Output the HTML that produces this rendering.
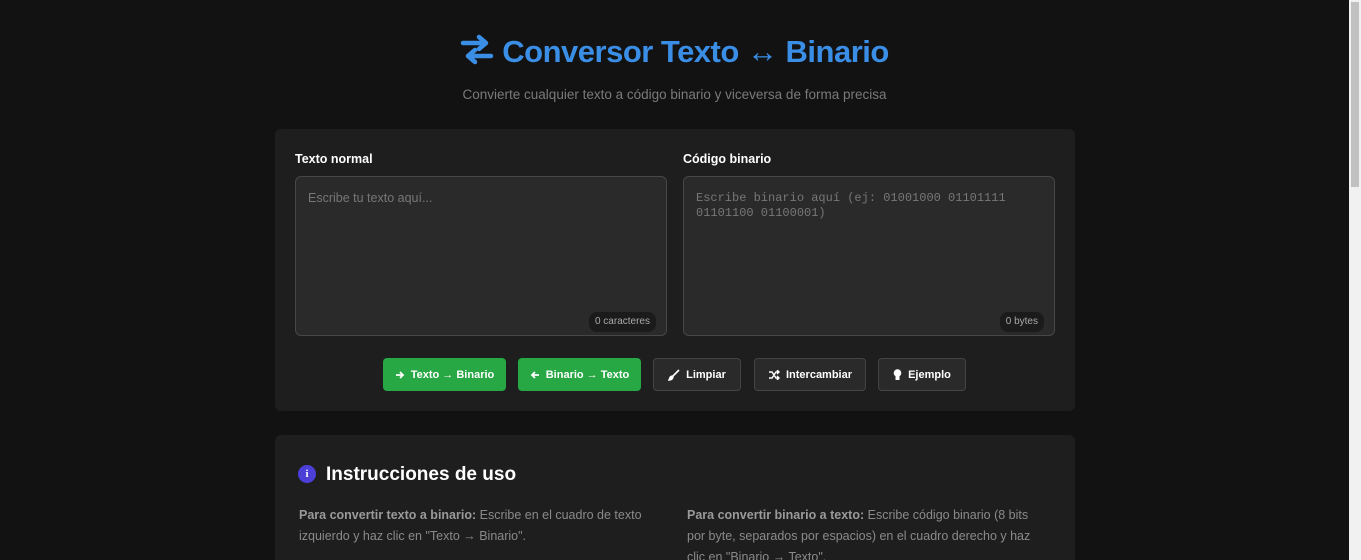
<!DOCTYPE html>
<html><head><meta charset="utf-8"><style>
*{box-sizing:border-box;margin:0;padding:0}
html,body{width:1361px;height:560px;overflow:hidden}
body{background:#121212;font-family:"Liberation Sans",sans-serif;color:#e0e0e0;position:relative}
.sb{position:absolute;right:0;top:0;width:12px;height:560px;background:#f1f1f1}
.sb div{position:absolute;left:2px;right:2px;top:2px;height:185px;background:#c1c1c1}
h1{position:absolute;left:0;width:1349px;top:32px;text-align:center;color:#3a8ee6;font-size:31px;font-weight:bold;letter-spacing:-0.5px}
.sub{position:absolute;left:0;width:1349px;top:87px;text-align:center;color:#7a7a7a;font-size:13.5px}
.card{position:absolute;left:275px;width:800px;background:#1e1e1e;border-radius:6px}
.lbl{position:absolute;top:152px;font-size:12.5px;font-weight:bold;color:#fff}
.ta{position:absolute;top:176px;height:160px;background:#2a2a2a;border:1px solid #474747;border-radius:6px;color:#777;font-size:12.5px;padding:14px 12px}
.mono{font-family:"Liberation Mono",monospace;font-size:12px;line-height:15px}
.cnt{position:absolute;bottom:3px;right:10px;background:#1b1b1b;border-radius:8px;color:#aaa;font-size:10px;padding:4px 6px;font-family:"Liberation Sans",sans-serif;line-height:12px}
.btn{position:absolute;top:358px;height:33px;border-radius:4px;font-size:11px;font-weight:bold;color:#fff;display:flex;align-items:center;justify-content:center;gap:6px}
.g{background:#28a745}
.d{background:#2a2a2a;border:1px solid #444}
.p{position:absolute;top:505px;font-size:12.5px;line-height:21px;color:#8a8a8a;width:360px}
.p b{color:#9a9a9a}
</style></head><body>
<div class="sb"><div></div></div>
<h1><svg width="34" height="34" viewBox="0 0 34 34" style="vertical-align:-4px"><path d="M3 11h22M19 5l7 6-7 6M31 24H9M15 18l-7 6 7 6" stroke="#3a8ee6" stroke-width="4.5" fill="none" stroke-linejoin="round" stroke-linecap="round"/></svg> Conversor Texto ↔ Binario</h1>
<div class="sub">Convierte cualquier texto a código binario y viceversa de forma precisa</div>
<div class="card" style="top:129px;height:282px"></div>
<div class="lbl" style="left:295px">Texto normal</div>
<div class="lbl" style="left:683px">Código binario</div>
<div class="ta" style="left:295px;width:372px">Escribe tu texto aquí...<span class="cnt">0 caracteres</span></div>
<div class="ta mono" style="left:683px;width:372px">Escribe binario aquí (ej: 01001000 01101111<br>01101100 01100001)<span class="cnt">0 bytes</span></div>
<div class="btn g" style="left:383px;width:123px"><svg width="10" height="10" viewBox="0 0 10 10"><path d="M1 5h7M5 2l3 3-3 3" stroke="#fff" stroke-width="1.8" fill="none"/></svg>Texto → Binario</div>
<div class="btn g" style="left:518px;width:123px"><svg width="10" height="10" viewBox="0 0 10 10"><path d="M9 5H2M5 2L2 5l3 3" stroke="#fff" stroke-width="1.8" fill="none"/></svg>Binario → Texto</div>
<div class="btn d" style="left:653px;width:88px"><svg width="12" height="12" viewBox="0 0 12 12"><path d="M11 1L5 7M5 7c-2 0-3 1-3 2l-1 2c2 0 4-1 4-4z" stroke="#fff" stroke-width="1.6" fill="#fff"/></svg>Limpiar</div>
<div class="btn d" style="left:754px;width:112px"><svg width="12" height="10" viewBox="0 0 12 10"><path d="M1 2h3l4 6h3M1 8h3l4-6h3M9 0l2 2-2 2M9 6l2 2-2 2" stroke="#fff" stroke-width="1.4" fill="none"/></svg>Intercambiar</div>
<div class="btn d" style="left:878px;width:88px"><svg width="9" height="12" viewBox="0 0 9 12"><circle cx="4.5" cy="4" r="3.8" fill="#fff"/><rect x="2.5" y="7" width="4" height="4" fill="#fff"/></svg>Ejemplo</div>
<div class="card" style="top:435px;height:140px"></div>
<div style="position:absolute;left:298px;top:465px;width:18px;height:18px;border-radius:50%;background:#4b3fd8;color:#fff;font-size:11px;font-weight:bold;text-align:center;line-height:18px;font-family:'Liberation Serif',serif">i</div>
<div style="position:absolute;left:326px;top:464px;font-size:19px;font-weight:bold;color:#fff">Instrucciones de uso</div>
<div class="p" style="left:299px"><b>Para convertir texto a binario:</b> Escribe en el cuadro de texto izquierdo y haz clic en "Texto → Binario".</div>
<div class="p" style="left:687px"><b>Para convertir binario a texto:</b> Escribe código binario (8 bits por byte, separados por espacios) en el cuadro derecho y haz clic en "Binario → Texto".</div>
</body></html>
